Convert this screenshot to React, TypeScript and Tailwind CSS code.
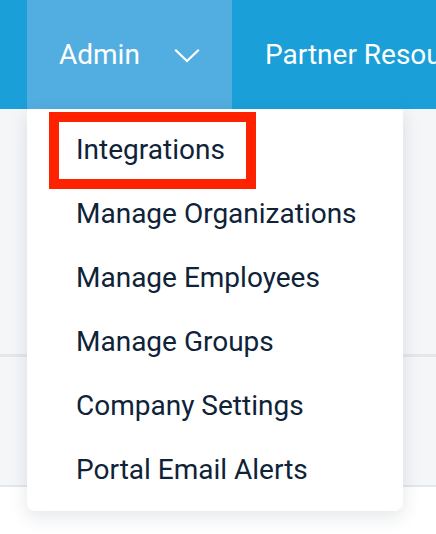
import React from "react";

const menuItems = [
  "Integrations",
  "Manage Organizations",
  "Manage Employees",
  "Manage Groups",
  "Company Settings",
  "Portal Email Alerts",
];

function ChevronDown() {
  return (
    <svg width="26" height="16" viewBox="0 0 26 16" fill="none">
      <path
        d="M2 2.5 L13 13 L24 2.5"
        stroke="white"
        strokeWidth="2.2"
        strokeLinecap="square"
      />
    </svg>
  );
}

export default function App() {
  return (
    <div className="relative h-[534px] w-[436px] overflow-hidden bg-white font-['Roboto',sans-serif]">
      {/* top nav */}
      <div className="flex h-[109px] bg-[#1a9fd9] text-[28px] text-white">
        <div className="w-[27px] shrink-0" />
        <div className="flex w-[205px] shrink-0 items-center bg-[#52aee0] pl-[32px]">
          <span className="leading-none">Admin</span>
          <span className="ml-[34px] mt-[2px] flex">
            <ChevronDown />
          </span>
        </div>
        <div className="flex items-center whitespace-nowrap pl-[33px]">
          <span className="leading-none">Partner Resources</span>
        </div>
      </div>

      {/* page body */}
      <div className="h-[245px] bg-[#f4f6f8]" />
      <div className="h-[3px] bg-[#e2e7eb]" />
      <div className="h-[128px] bg-[#f4f6f8]" />
      <div className="h-[2px] bg-[#e2e7eb]" />

      {/* dropdown */}
      <div className="absolute left-[27px] top-[109px] w-[376px] rounded-b-[8px] bg-white pb-[9px] pt-[9px] shadow-[0_6px_18px_rgba(30,50,70,0.12)]">
        {menuItems.map((item) => (
          <div
            key={item}
            className="flex h-[64px] items-center pl-[49px] text-[28px] leading-none text-[#0e2338]"
          >
            {item}
          </div>
        ))}
      </div>

      {/* highlight annotation */}
      <div className="absolute left-[49px] top-[112px] h-[77px] w-[207px] border-[10px] border-[#fe2200]" />
    </div>
  );
}
